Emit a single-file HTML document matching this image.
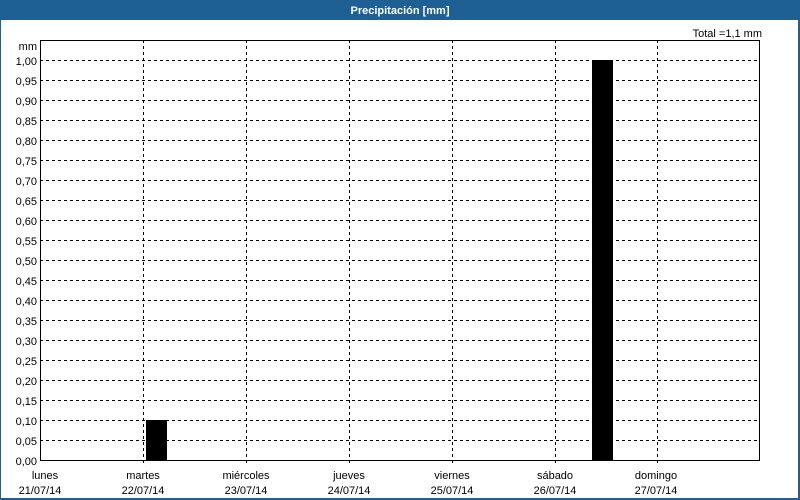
<!DOCTYPE html>
<html><head><style>
html,body{margin:0;padding:0;background:#fff;}
body{width:800px;height:500px;overflow:hidden;position:relative;}
</style></head><body>
<svg width="800" height="500" xmlns="http://www.w3.org/2000/svg" style="position:absolute;left:0;top:0" font-family="'Liberation Sans', sans-serif" font-size="11">
<rect x="0" y="0" width="800" height="500" fill="#1e5f94"/>
<rect x="1" y="20" width="797" height="478" fill="#fff"/>
<text x="400" y="14" fill="#fff" font-weight="bold" text-anchor="middle">Precipitación [mm]</text>
<text x="762" y="37" fill="#000" text-anchor="end">Total =1,1 mm</text>
<text x="37" y="50" text-anchor="end">mm</text>
<g stroke="#000" stroke-dasharray="3,3" stroke-width="1">
<line x1="40" y1="60.5" x2="760" y2="60.5"/><line x1="40" y1="80.5" x2="760" y2="80.5"/><line x1="40" y1="100.5" x2="760" y2="100.5"/><line x1="40" y1="120.5" x2="760" y2="120.5"/><line x1="40" y1="140.5" x2="760" y2="140.5"/><line x1="40" y1="160.5" x2="760" y2="160.5"/><line x1="40" y1="180.5" x2="760" y2="180.5"/><line x1="40" y1="200.5" x2="760" y2="200.5"/><line x1="40" y1="220.5" x2="760" y2="220.5"/><line x1="40" y1="240.5" x2="760" y2="240.5"/><line x1="40" y1="260.5" x2="760" y2="260.5"/><line x1="40" y1="280.5" x2="760" y2="280.5"/><line x1="40" y1="300.5" x2="760" y2="300.5"/><line x1="40" y1="320.5" x2="760" y2="320.5"/><line x1="40" y1="340.5" x2="760" y2="340.5"/><line x1="40" y1="360.5" x2="760" y2="360.5"/><line x1="40" y1="380.5" x2="760" y2="380.5"/><line x1="40" y1="400.5" x2="760" y2="400.5"/><line x1="40" y1="420.5" x2="760" y2="420.5"/><line x1="40" y1="440.5" x2="760" y2="440.5"/>
<line x1="143.5" y1="40" x2="143.5" y2="464"/><line x1="246.5" y1="40" x2="246.5" y2="464"/><line x1="349.5" y1="40" x2="349.5" y2="464"/><line x1="452.5" y1="40" x2="452.5" y2="464"/><line x1="555.5" y1="40" x2="555.5" y2="464"/><line x1="657.5" y1="40" x2="657.5" y2="464"/>
</g>
<rect x="146" y="420" width="21" height="40" fill="#000"/>
<rect x="592" y="60" width="21" height="400" fill="#000"/>
<rect x="40.5" y="40.5" width="719" height="420" fill="none" stroke="#000"/>
<g text-anchor="end">
<text x="37" y="65">1,00</text><text x="37" y="85">0,95</text><text x="37" y="105">0,90</text><text x="37" y="125">0,85</text><text x="37" y="145">0,80</text><text x="37" y="165">0,75</text><text x="37" y="185">0,70</text><text x="37" y="205">0,65</text><text x="37" y="225">0,60</text><text x="37" y="245">0,55</text><text x="37" y="265">0,50</text><text x="37" y="285">0,45</text><text x="37" y="305">0,40</text><text x="37" y="325">0,35</text><text x="37" y="345">0,30</text><text x="37" y="365">0,25</text><text x="37" y="385">0,20</text><text x="37" y="405">0,15</text><text x="37" y="425">0,10</text><text x="37" y="445">0,05</text><text x="37" y="465">0,00</text>
</g>
<g text-anchor="middle">
<text x="45" y="479">lunes</text><text x="40" y="494">21/07/14</text>
<text x="143" y="479">martes</text><text x="143" y="494">22/07/14</text>
<text x="246" y="479">miércoles</text><text x="246" y="494">23/07/14</text>
<text x="349" y="479">jueves</text><text x="349" y="494">24/07/14</text>
<text x="452" y="479">viernes</text><text x="452" y="494">25/07/14</text>
<text x="555" y="479">sábado</text><text x="555" y="494">26/07/14</text>
<text x="656" y="479">domingo</text><text x="656" y="494">27/07/14</text>
</g>
</svg>
</body></html>
